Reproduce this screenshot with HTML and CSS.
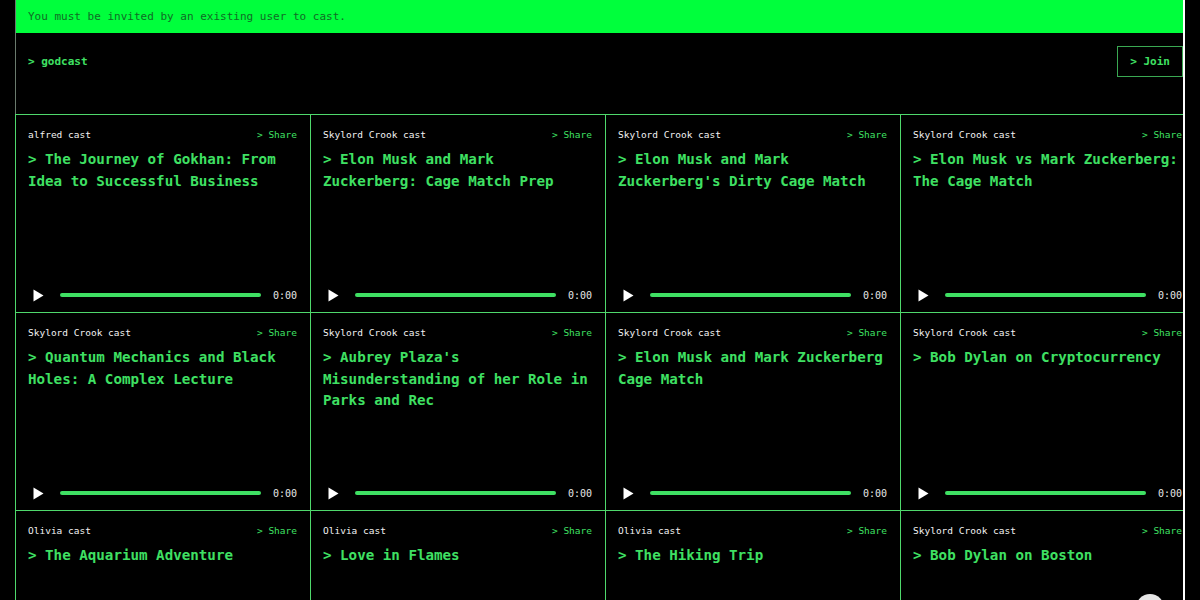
FILE: index.html
```html
<!DOCTYPE html>
<html>
<head>
  <link rel="stylesheet" href="styles.css">
</head>
<body>
  <div class="page">
    <div class="notice">You must be invited by an existing user to cast.</div>
    <div class="header">
      <span class="logo">&gt; godcast</span>
      <button class="join">&gt; Join</button>
    </div>
    <div class="casts" id="casts"></div>
  </div>
  <div class="fab"></div>

  <script>
    const casts = [
      { author: 'alfred', title: 'The Journey of Gokhan: From Idea to Successful Business' },
      { author: 'Skylord Crook', title: 'Elon Musk and Mark Zuckerberg: Cage Match Prep' },
      { author: 'Skylord Crook', title: "Elon Musk and Mark Zuckerberg's Dirty Cage Match" },
      { author: 'Skylord Crook', title: 'Elon Musk vs Mark Zuckerberg: The Cage Match' },
      { author: 'Skylord Crook', title: 'Quantum Mechanics and Black Holes: A Complex Lecture' },
      { author: 'Skylord Crook', title: "Aubrey Plaza's Misunderstanding of her Role in Parks and Rec" },
      { author: 'Skylord Crook', title: 'Elon Musk and Mark Zuckerberg Cage Match' },
      { author: 'Skylord Crook', title: 'Bob Dylan on Cryptocurrency' },
      { author: 'Olivia', title: 'The Aquarium Adventure' },
      { author: 'Olivia', title: 'Love in Flames' },
      { author: 'Olivia', title: 'The Hiking Trip' },
      { author: 'Skylord Crook', title: 'Bob Dylan on Boston' }
    ];

    const list = document.getElementById('casts');
    casts.forEach((cast) => {
      const card = document.createElement('div');
      card.className = 'cast';
      card.innerHTML = `
        <div class="cast-meta">
          <span class="author">${cast.author} cast</span>
          <a class="share">&gt; Share</a>
        </div>
        <div class="title">&gt; ${cast.title}</div>
        <div class="player">
          <svg class="play" width="11" height="13" viewBox="0 0 11 13"><path d="M0.5 0.5 L10.5 6.5 L0.5 12.5 Z" fill="#fff"/></svg>
          <div class="track"></div>
          <span class="time">0:00</span>
        </div>`;
      list.appendChild(card);
    });
  </script>
</body>
</html>
```

FILE: styles.css
```css
html, body {
  margin: 0;
  background-color: #000;
  font-family: "DejaVu Sans Mono", "Liberation Mono", monospace;
  overflow: hidden;
}

.page {
  margin-left: 15px;
  width: 1168px;
  height: 600px;
  overflow: hidden;
  border-right: 2px solid #fff;
}

.notice {
  width: 1181px;
  height: 33px;
  box-sizing: border-box;
  padding: 0 12px;
  line-height: 33px;
  border-left: 1px solid #6a7a6d;
  background-color: #00ff3c;
  color: #116b25;
  font-size: 11px;
}

.header {
  width: 1181px;
  height: 81px;
  box-sizing: border-box;
  padding: 13px 13px 0 12px;
  border-left: 1px solid #6a7a6d;
  display: flex;
  align-items: flex-start;
  justify-content: space-between;
}

.logo {
  line-height: 31px;
  color: #3fe063;
  font-size: 11px;
  font-weight: bold;
}

.join {
  height: 31px;
  padding: 0 12px;
  background: none;
  border: 1px solid #3aa852;
  color: #3fe063;
  font-family: inherit;
  font-size: 11px;
  font-weight: bold;
}

.casts {
  width: 1181px;
  display: grid;
  grid-template-columns: repeat(4, 295px);
  border-top: 1px solid #4fd86c;
  border-left: 1px solid #4fd86c;
}

.cast {
  height: 198px;
  box-sizing: border-box;
  padding: 13px 13px 7px 12px;
  border-right: 1px solid #4fd86c;
  border-bottom: 1px solid #4fd86c;
  display: flex;
  flex-direction: column;
}

.cast-meta {
  display: flex;
  justify-content: space-between;
  align-items: baseline;
  line-height: 14px;
}

.author {
  color: #f2f2f2;
  font-size: 9.5px;
}

.share {
  color: #3fe063;
  font-size: 9.5px;
  cursor: pointer;
}

.title {
  margin-top: 7px;
  color: #3fe063;
  font-size: 14.2px;
  font-weight: bold;
  line-height: 21.5px;
}

.player {
  margin-top: auto;
  height: 20px;
  display: flex;
  align-items: center;
}

.play {
  margin-left: 5px;
  flex: none;
}

.track {
  flex: 1;
  height: 4px;
  margin: 0 12px 0 16px;
  border-radius: 2px;
  background-color: #3fe063;
}

.time {
  color: #e8e8e8;
  font-size: 10px;
}

.fab {
  position: fixed;
  left: 1136px;
  top: 594px;
  width: 28px;
  height: 28px;
  border-radius: 50%;
  background-color: #e6e6e6;
}
```
